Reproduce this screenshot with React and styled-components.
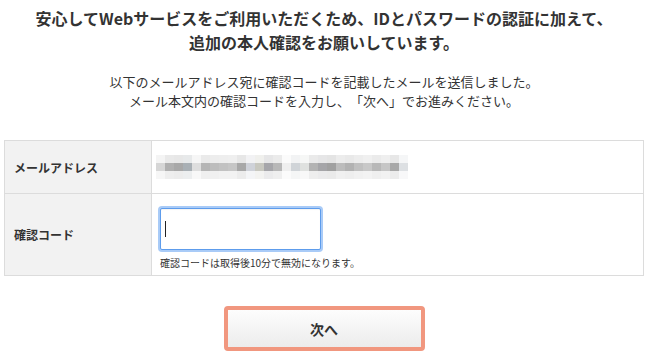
import React from 'react';
import styled, { createGlobalStyle } from 'styled-components';

const GlobalStyle = createGlobalStyle`
  html, body {
    margin: 0;
    padding: 0;
    background: #fff;
  }
  body {
    font-family: "Noto Sans CJK JP", "Noto Sans", sans-serif;
    color: #333;
    text-spacing-trim: space-all;
  }
`;

const Page = styled.div`
  width: 640px;
  margin: 0 auto;
  padding: 6px 0 0;
`;

const Lead = styled.h1`
  margin: 0;
  font-size: 16px;
  line-height: 24px;
  font-weight: 700;
  text-align: center;
  color: #333;
`;

const Note = styled.p`
  margin: 18px 0 0;
  font-size: 13px;
  line-height: 19px;
  text-align: center;
  color: #333;
`;

const Form = styled.div`
  margin-top: 30px;
  display: grid;
  grid-template-columns: 147px 1fr;
  border: 1px solid #dcdcdc;
  border-bottom: none;
`;

const Label = styled.div`
  background: #f2f2f2;
  border-right: 1px solid #dcdcdc;
  border-bottom: 1px solid #dcdcdc;
  height: ${p => p.$h}px;
  box-sizing: border-box;
  display: flex;
  align-items: center;
  padding-left: 9px;
  font-size: 12px;
  font-weight: 700;
  color: #333;
`;

const Value = styled.div`
  border-bottom: 1px solid #dcdcdc;
  height: ${p => p.$h}px;
  box-sizing: border-box;
  display: flex;
  flex-direction: column;
  justify-content: ${p => (p.$center ? 'center' : 'flex-start')};
  padding: ${p => (p.$center ? '0 4px' : '14px 8px 0')};
`;

const Mosaic = styled.div`
  display: grid;
  grid-template-columns: repeat(28, 9px);
  grid-auto-rows: 8px;
  width: max-content;
  filter: blur(0.4px);
`;

const Block = styled.div`
  background: ${p => p.$c};
`;

const Field = styled.div`
  position: relative;
  width: 161px;

  &::after {
    content: "";
    position: absolute;
    left: 5px;
    top: 13px;
    width: 1px;
    height: 16px;
    background: #222;
    pointer-events: none;
  }
`;

const CodeInput = styled.input`
  display: block;
  box-sizing: border-box;
  width: 161px;
  height: 42px;
  border: 1px solid #5d9cec;
  border-radius: 2px;
  box-shadow: 0 0 0 2px #a9cbf7, inset 0 1px 1px rgba(0, 0, 0, 0.05);
  padding: 0 5px;
  font-size: 14px;
  font-family: inherit;
  color: #333;
  outline: none;
  caret-color: transparent;
`;

const Help = styled.div`
  margin-top: 6px;
  font-size: 10px;
  line-height: 14px;
  color: #333;
`;

const Actions = styled.div`
  display: flex;
  justify-content: center;
  margin-top: 30px;
`;

const NextButton = styled.button`
  width: 201px;
  height: 45px;
  box-sizing: border-box;
  border: 4px solid #f1977f;
  border-radius: 4px;
  background: linear-gradient(#fdfdfd, #ececec);
  font-family: inherit;
  font-size: 14px;
  font-weight: 700;
  color: #333;
  cursor: pointer;
`;

const middle = [
  '#d6d6d6', '#b0b0b0', '#a8a8a8', '#a9b0b5', '#dedede', '#b5b5b5', '#bdbdbd',
  '#c2c2c2', '#c6c6c6', '#a8a8a8', '#cfd2d9', '#c8c8c0', '#a6a6aa', '#b8b8b8',
  '#efefef', '#d0d4d8', '#dfe1df', '#b3b3b3', '#a5a5a8', '#a0a0a0', '#bcbcbc',
  '#b2b2b2', '#c0c0c0', '#c8c8c8', '#b8b8b8', '#c6c6c6', '#a8a8a8', '#dde0e3',
];

const lighten = (hex, amt) => {
  const n = parseInt(hex.slice(1), 16);
  const ch = [(n >> 16) & 255, (n >> 8) & 255, n & 255].map(v =>
    Math.round(v + (255 - v) * amt)
  );
  return `rgb(${ch.join(',')})`;
};

const blocks = [
  ...middle.map(c => lighten(c, 0.72)),
  ...middle,
  ...middle.map(c => lighten(c, 0.78)),
];

const App = () => (
  <>
    <GlobalStyle />
    <Page>
      <Lead>
        安心してWebサービスをご利用いただくため、IDとパスワードの認証に加えて、
        <br />
        追加の本人確認をお願いしています。
      </Lead>
      <Note>
        以下のメールアドレス宛に確認コードを記載したメールを送信しました。
        <br />
        メール本文内の確認コードを入力し、「次へ」でお進みください。
      </Note>

      <Form>
        <Label $h={53}>メールアドレス</Label>
        <Value $h={53} $center>
          <Mosaic>
            {blocks.map((c, i) => (
              <Block key={i} $c={c} />
            ))}
          </Mosaic>
        </Value>

        <Label $h={82}>確認コード</Label>
        <Value $h={82}>
          <Field>
            <CodeInput type="text" />
          </Field>
          <Help>確認コードは取得後10分で無効になります。</Help>
        </Value>
      </Form>

      <Actions>
        <NextButton type="button">次へ</NextButton>
      </Actions>
    </Page>
  </>
);

export default App;
